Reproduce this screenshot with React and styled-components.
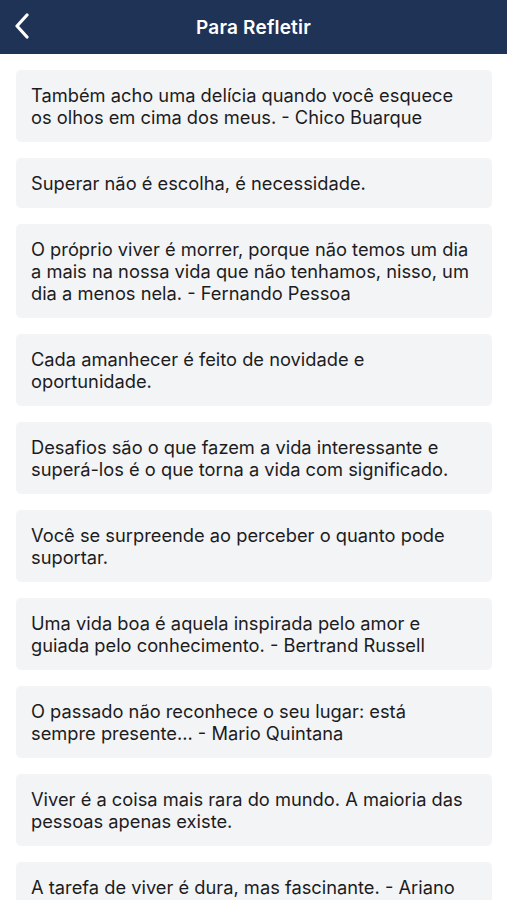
import styled, { createGlobalStyle } from "styled-components";

const GlobalStyle = createGlobalStyle`
  html, body {
    margin: 0;
    padding: 0;
    background: #fff;
  }
  body {
    font-family: Inter, "Noto Sans", "Liberation Sans", sans-serif;
    -webkit-font-smoothing: antialiased;
  }
  * {
    box-sizing: border-box;
  }
`;

const Page = styled.div`
  width: 507px;
  height: 900px;
  overflow: hidden;
  background: #fff;
`;

const Header = styled.header`
  position: relative;
  height: 54px;
  background: #1f3356;
  display: flex;
  align-items: center;
  justify-content: center;
`;

const BackButton = styled.button`
  position: absolute;
  left: 8px;
  top: 11px;
  width: 28px;
  height: 30px;
  padding: 0;
  border: 0;
  background: none;
  display: flex;
  align-items: center;
  justify-content: center;
  cursor: pointer;
`;

const Title = styled.h1`
  margin: 0;
  color: #fff;
  font-size: 19px;
  font-weight: 600;
  letter-spacing: 0.2px;
`;

const List = styled.ul`
  list-style: none;
  margin: 0;
  padding: 16px 15px 0 16px;
  display: flex;
  flex-direction: column;
  gap: 16px;
`;

const Card = styled.li`
  background: #f3f4f6;
  border-radius: 5px;
  padding: 14px 6px 14px 15px;
  color: #1c1c1e;
  font-size: 18.3px;
  line-height: 22px;
  white-space: nowrap;
`;

const Line = styled.span`
  display: block;
`;

// lines kept as broken in the app
const quotes = [
  ["Também acho uma delícia quando você esquece", "os olhos em cima dos meus. - Chico Buarque"],
  ["Superar não é escolha, é necessidade."],
  [
    "O próprio viver é morrer, porque não temos um dia",
    "a mais na nossa vida que não tenhamos, nisso, um",
    "dia a menos nela. - Fernando Pessoa",
  ],
  ["Cada amanhecer é feito de novidade e", "oportunidade."],
  ["Desafios são o que fazem a vida interessante e", "superá-los é o que torna a vida com significado."],
  ["Você se surpreende ao perceber o quanto pode", "suportar."],
  ["Uma vida boa é aquela inspirada pelo amor e", "guiada pelo conhecimento. - Bertrand Russell"],
  ["O passado não reconhece o seu lugar: está", "sempre presente... - Mario Quintana"],
  ["Viver é a coisa mais rara do mundo. A maioria das", "pessoas apenas existe."],
  ["A tarefa de viver é dura, mas fascinante. - Ariano", "Suassuna"],
];

export default function App() {
  return (
    <Page>
      <GlobalStyle />
      <Header>
        <BackButton aria-label="Voltar">
          <svg width="16" height="26" viewBox="0 0 16 26" fill="none">
            <path
              d="M13 2 L3 13 L13 24"
              stroke="#fff"
              strokeWidth="3.2"
              strokeLinecap="round"
              strokeLinejoin="round"
            />
          </svg>
        </BackButton>
        <Title>Para Refletir</Title>
      </Header>
      <List>
        {quotes.map((lines) => (
          <Card key={lines[0]}>
            {lines.map((l) => (
              <Line key={l}>{l}</Line>
            ))}
          </Card>
        ))}
      </List>
    </Page>
  );
}
